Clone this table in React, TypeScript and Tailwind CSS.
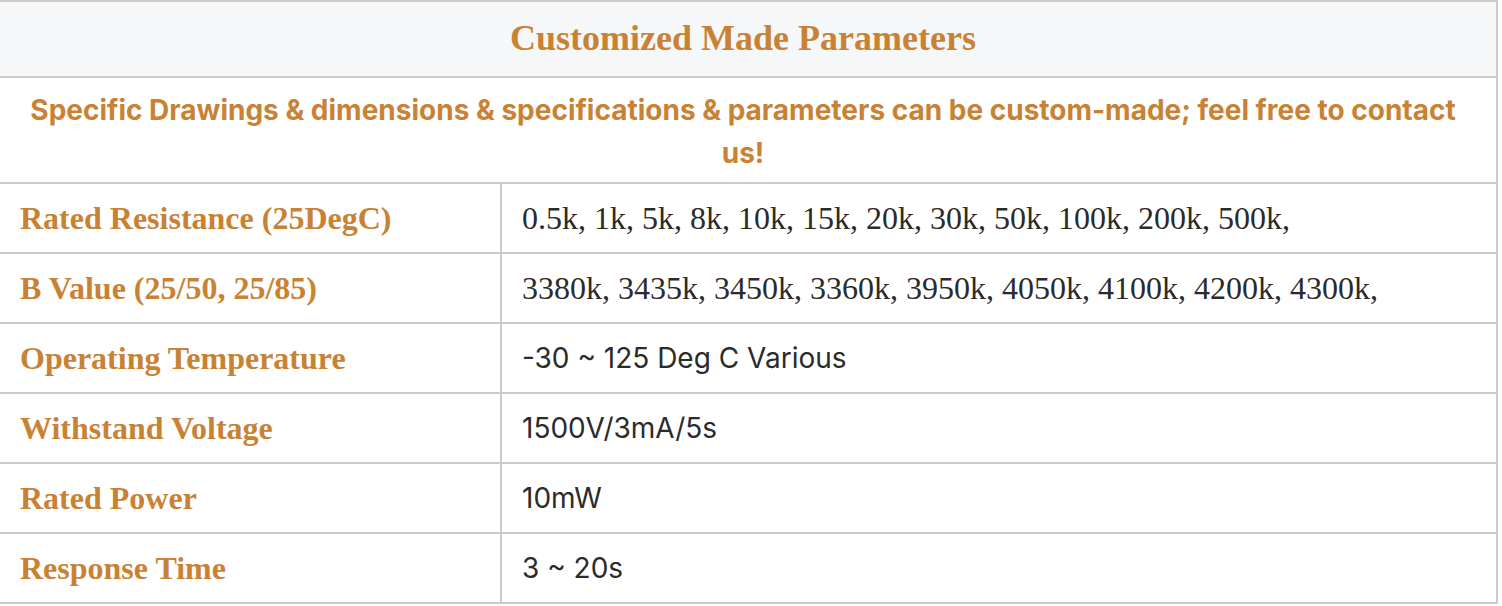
const ROWS: { label: string; value: string; serif?: boolean }[] = [
  {
    label: 'Rated Resistance (25DegC)',
    value: '0.5k, 1k, 5k, 8k, 10k, 15k, 20k, 30k, 50k, 100k, 200k, 500k,',
    serif: true,
  },
  {
    label: 'B Value (25/50, 25/85)',
    value: '3380k, 3435k, 3450k, 3360k, 3950k, 4050k, 4100k, 4200k, 4300k,',
    serif: true,
  },
  { label: 'Operating Temperature', value: '-30 ~ 125 Deg C Various' },
  { label: 'Withstand Voltage', value: '1500V/3mA/5s' },
  { label: 'Rated Power', value: '10mW' },
  { label: 'Response Time', value: '3 ~ 20s' },
];

export default function App() {
  return (
    <div className="w-[1502px] h-[606px] bg-white overflow-hidden">
      {/* table runs slightly off the left edge of the viewport */}
      <div className="w-[1510px] -ml-[12px] border-2 border-[#cbcbcb]">
        <div className="h-[76px] pb-[3px] flex items-center justify-center bg-[#f6f7f9] border-b-2 border-[#cbcbcb]">
          <h2 className="font-['Liberation_Serif',serif] font-bold text-[36px] leading-none text-[#c98233]">
            Customized Made Parameters
          </h2>
        </div>

        <div className="h-[106px] pt-[4px] flex items-center justify-center px-[30px] border-b-2 border-[#cbcbcb]">
          <p className="font-['Inter',sans-serif] font-bold text-[28px] leading-[43px] text-center text-[#c98233]">
            Specific Drawings &amp; dimensions &amp; specifications &amp; parameters can be custom-made; feel free to contact us!
          </p>
        </div>

        {ROWS.map((r, i) => (
          <div
            key={r.label}
            className={`grid grid-cols-[512px_1fr] ${
              i < ROWS.length - 1 ? 'h-[70px] border-b-2 border-[#cbcbcb]' : 'h-[68px]'
            }`}
          >
            <div className="flex items-center pl-[30px] border-r-2 border-[#cbcbcb] font-['Liberation_Serif',serif] font-bold text-[32px] text-[#c98233]">
              {r.label}
            </div>
            <div
              className={`flex items-center pl-5 text-[#2b2b2b] ${
                r.serif
                  ? "font-['Liberation_Serif',serif] text-[32px]"
                  : "font-['Inter',sans-serif] text-[28px]"
              }`}
            >
              {r.value}
            </div>
          </div>
        ))}
      </div>
    </div>
  );
}
